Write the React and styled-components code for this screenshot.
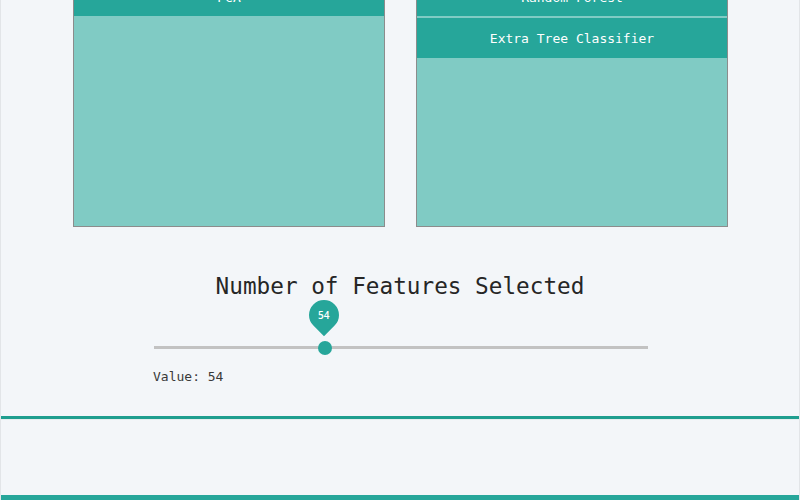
import React from "react";
import styled, { createGlobalStyle } from "styled-components";

const GlobalStyle = createGlobalStyle`
  html, body {
    margin: 0;
    padding: 0;
    height: 100%;
    overflow: hidden;
    background: #f3f6f9;
  }
  * {
    box-sizing: border-box;
  }
`;

const mono = `"DejaVu Sans Mono", "Liberation Mono", monospace`;

const Page = styled.div`
  height: 100vh;
  display: flex;
  flex-direction: column;
  border-left: 1px solid #e2e5e8;
  border-right: 1px solid #e2e5e8;
  font-family: ${mono};
  color: #2b2b2b;
`;

const Main = styled.main`
  flex: 1;
  display: flex;
  flex-direction: column;
  align-items: center;
  overflow: hidden;
`;

// page is scrolled: the top of the cards sits above the viewport
const CardRow = styled.section`
  display: flex;
  gap: 31px;
  margin-top: -25px;
  margin-left: 1px;
`;

const Card = styled.div`
  width: 312px;
  height: 252px;
  border: 1px solid #8c8c8c;
  background: #80cbc4;
  display: flex;
  flex-direction: column;
  gap: 2px;
`;

const MethodButton = styled.div`
  height: 40px;
  padding-top: 2px;
  background: #26a69a;
  color: #fff;
  font-size: 13px;
  display: flex;
  align-items: center;
  justify-content: center;

  & + & {
    padding-top: 0;
  }
`;

const Title = styled.h2`
  margin: 45px 0 0;
  font-size: 22.7px;
  font-weight: 400;
  line-height: 28px;
  color: #262626;
`;

const SliderBlock = styled.div`
  width: 495px;
  margin-left: 1px;
  padding-top: 46px;
`;

const Track = styled.div`
  position: relative;
  height: 3px;
  margin-left: 1px;
  background: #c2c2c2;
`;

const Thumb = styled.div`
  position: absolute;
  top: 50%;
  width: 14px;
  height: 14px;
  margin: -7px 0 0 -7px;
  border-radius: 50%;
  background: #26a69a;
`;

const Pin = styled.div`
  position: absolute;
  top: -46px;
  width: 30px;
  height: 30px;
  margin-left: -16px;
  background: #26a69a;
  border-radius: 50% 50% 50% 0;
  transform: rotate(-45deg);
  display: flex;
  align-items: center;
  justify-content: center;
`;

const PinLabel = styled.span`
  transform: rotate(45deg);
  color: #fff;
  font-family: "Open Sans", "Noto Sans", sans-serif;
  font-size: 10px;
  font-weight: 600;
`;

const ValueText = styled.div`
  margin-top: 19px;
  font-size: 13px;
  line-height: 18px;
  color: #3a3a3a;
`;

const Footer = styled.footer`
  height: 79px;
  border-top: 3px solid #1f9e8f;
  box-shadow: inset 0 1px 0 #e6eeee;
`;

const BottomBar = styled.div`
  height: 5px;
  background: #26a69a;
`;

const reducers = ["PCA"];
const classifiers = ["Random Forest", "Extra Tree Classifier"];

export default function App() {
  const value = 54;
  const min = 1;
  const max = 154;
  const pos = ((value - min) / (max - min)) * 100;

  return (
    <>
      <GlobalStyle />
      <Page>
        <Main>
          <CardRow>
            <Card>
              {reducers.map((m) => (
                <MethodButton key={m}>{m}</MethodButton>
              ))}
            </Card>
            <Card>
              {classifiers.map((m) => (
                <MethodButton key={m}>{m}</MethodButton>
              ))}
            </Card>
          </CardRow>

          <Title>Number of Features Selected</Title>
          <SliderBlock>
            <Track>
              <Pin style={{ left: `${pos}%` }}>
                <PinLabel>{value}</PinLabel>
              </Pin>
              <Thumb style={{ left: `${pos}%` }} />
            </Track>
            <ValueText>Value: {value}</ValueText>
          </SliderBlock>
        </Main>
        <Footer />
        <BottomBar />
      </Page>
    </>
  );
}
